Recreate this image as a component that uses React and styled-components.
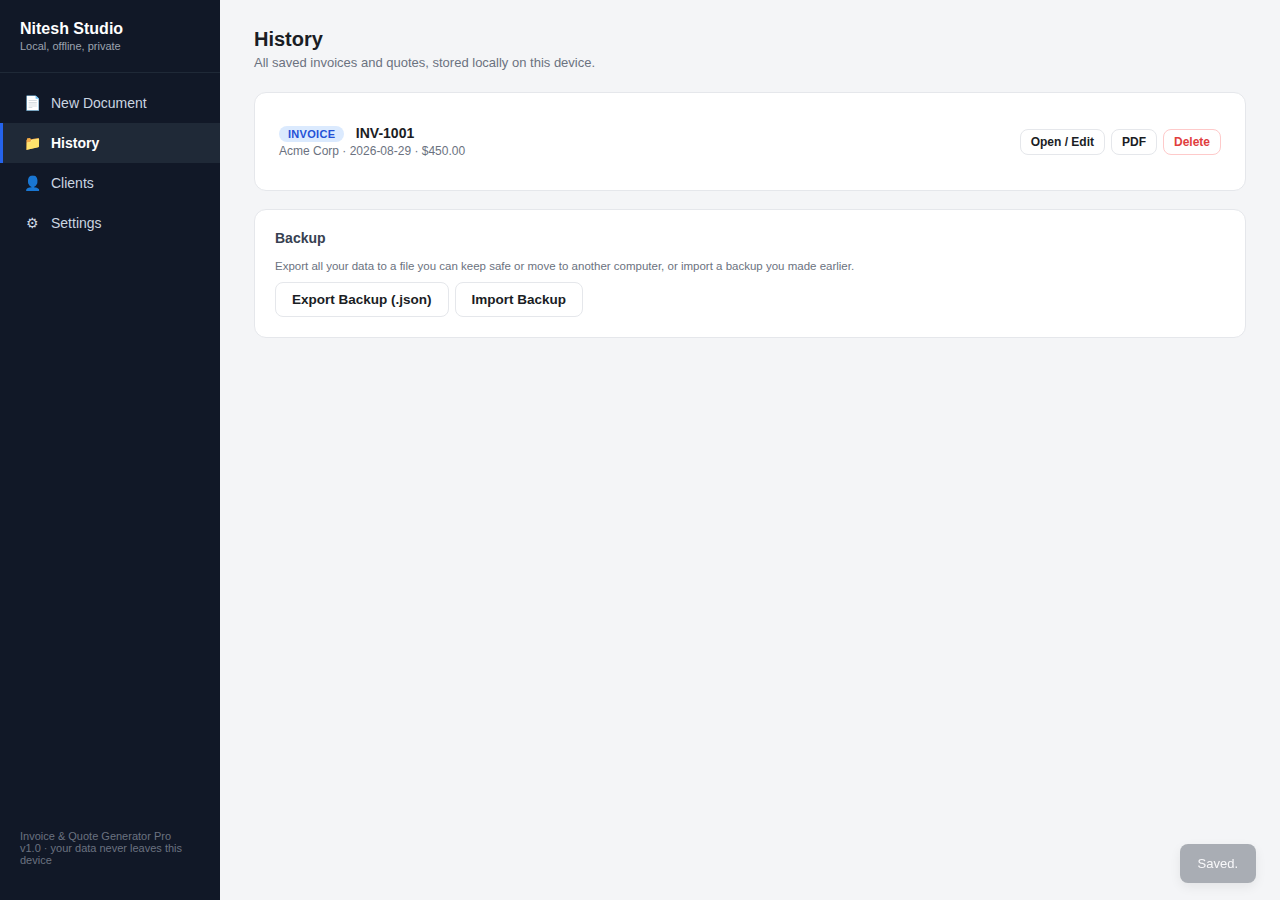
import React from 'react'
import styled, { createGlobalStyle } from 'styled-components'

const GlobalStyle = createGlobalStyle`
  * {
    box-sizing: border-box;
  }

  html, body {
    margin: 0;
    padding: 0;
    height: 100%;
  }

  body {
    background: #f4f5f7;
    color: #1f2937;
    font-family: "Liberation Sans", Arial, sans-serif;
  }
`

const Layout = styled.div`
  display: flex;
  min-height: 900px;
`

const Sidebar = styled.aside`
  flex: 0 0 220px;
  display: flex;
  flex-direction: column;
  background: #111827;
  color: #d1d5db;
`

const Brand = styled.div`
  padding: 20px 20px 19px;
  border-bottom: 1px solid #1f2937;
`

const BrandName = styled.div`
  font-size: 16px;
  line-height: 18px;
  font-weight: 700;
  color: #ffffff;
`

const BrandSub = styled.div`
  margin-top: 2px;
  font-size: 11px;
  line-height: 13px;
  color: #9ca3af;
`

const Nav = styled.nav`
  flex: 1;
  padding: 10px 0;
`

const NavItem = styled.div`
  display: flex;
  align-items: center;
  gap: 10px;
  height: 40px;
  padding: 0 20px;
  border-left: 3px solid ${(p) => (p.$active ? '#2563eb' : 'transparent')};
  background: ${(p) => (p.$active ? '#1f2937' : 'transparent')};
  color: ${(p) => (p.$active ? '#ffffff' : '#cbd5e1')};
  font-size: 14px;
  font-weight: ${(p) => (p.$active ? 700 : 400)};
`

const NavIcon = styled.span`
  flex: 0 0 18px;
  text-align: center;
  font-size: 14px;
`

const SidebarFooter = styled.div`
  padding: 0 20px 34px;
  font-size: 11px;
  line-height: 12px;
  color: #6b7280;
`

const Main = styled.main`
  flex: 1;
  padding: 28px 34px;
`

const PageTitle = styled.h1`
  margin: 0;
  font-size: 20px;
  line-height: 23px;
  font-weight: 700;
  color: #1a1d24;
`

const PageSub = styled.p`
  margin: 4px 0 22px;
  font-size: 13px;
  line-height: 15px;
  color: #6b7280;
`

const Card = styled.section`
  margin-bottom: 18px;
  padding: 20px;
  background: #ffffff;
  border: 1px solid #e5e7eb;
  border-radius: 12px;
`

const DocRow = styled.div`
  display: flex;
  align-items: center;
  justify-content: space-between;
  padding: 12px 4px;
`

const DocTop = styled.div`
  display: flex;
  align-items: baseline;
  gap: 11.5px;
`

const Badge = styled.span`
  padding: 2px 9px;
  background: #dbeafe;
  border-radius: 999px;
  color: #2451d6;
  font-size: 11px;
  line-height: 12px;
  font-weight: 700;
  letter-spacing: 0.3px;
`

const DocNumber = styled.span`
  font-size: 14px;
  line-height: 16px;
  font-weight: 700;
  color: #1a1d24;
`

const DocMeta = styled.div`
  margin-top: 2px;
  font-size: 12px;
  line-height: 14px;
  color: #6b7280;
`

const Actions = styled.div`
  display: flex;
  gap: 6px;
`

const SmallButton = styled.button`
  height: 26px;
  padding: 0 10px;
  background: #ffffff;
  border: 1px solid ${(p) => (p.$danger ? '#fecaca' : '#e5e7eb')};
  border-radius: 8px;
  color: ${(p) => (p.$danger ? '#e03e3e' : '#1a1d24')};
  font-family: inherit;
  font-size: 12px;
  font-weight: 700;
`

const CardTitle = styled.h3`
  margin: 0 0 14px;
  font-size: 14px;
  line-height: 16px;
  font-weight: 700;
  color: #374151;
`

const CardText = styled.p`
  margin: 0 0 9px;
  font-size: 11.5px;
  line-height: 13px;
  color: #6b7280;
`

const Button = styled.button`
  height: 35px;
  margin-right: 6px;
  padding: 0 16px;
  background: #ffffff;
  border: 1px solid #e5e7eb;
  border-radius: 8px;
  color: #1a1d24;
  font-family: inherit;
  font-size: 13.5px;
  font-weight: 700;
`

const Toast = styled.div`
  position: fixed;
  right: 24px;
  bottom: 17px;
  padding: 12px 18px;
  background: #1f2937;
  border-radius: 8px;
  box-shadow: 0 4px 12px rgba(0, 0, 0, 0.2);
  color: #ffffff;
  font-size: 13px;
  line-height: 15px;
  opacity: 0.35;
`

const navItems = [
  { icon: '📄', label: 'New Document' },
  { icon: '📁', label: 'History', active: true },
  { icon: '👤', label: 'Clients' },
  { icon: '⚙', label: 'Settings' }
]

const App = () => (
  <Layout>
    <GlobalStyle />
    <Sidebar>
      <Brand>
        <BrandName>Nitesh Studio</BrandName>
        <BrandSub>Local, offline, private</BrandSub>
      </Brand>
      <Nav>
        {navItems.map((item) => (
          <NavItem key={item.label} $active={item.active}>
            <NavIcon>{item.icon}</NavIcon>
            {item.label}
          </NavItem>
        ))}
      </Nav>
      <SidebarFooter>
        Invoice &amp; Quote Generator Pro
        <br />
        v1.0 · your data never leaves this device
      </SidebarFooter>
    </Sidebar>

    <Main>
      <PageTitle>History</PageTitle>
      <PageSub>All saved invoices and quotes, stored locally on this device.</PageSub>

      <Card>
        <DocRow>
          <div>
            <DocTop>
              <Badge>INVOICE</Badge>
              <DocNumber>INV-1001</DocNumber>
            </DocTop>
            <DocMeta>Acme Corp · 2026-08-29 · $450.00</DocMeta>
          </div>
          <Actions>
            <SmallButton>Open / Edit</SmallButton>
            <SmallButton>PDF</SmallButton>
            <SmallButton $danger>Delete</SmallButton>
          </Actions>
        </DocRow>
      </Card>

      <Card>
        <CardTitle>Backup</CardTitle>
        <CardText>
          Export all your data to a file you can keep safe or move to another computer, or import a backup you made earlier.
        </CardText>
        <Button>Export Backup (.json)</Button>
        <Button>Import Backup</Button>
      </Card>
    </Main>

    <Toast>Saved.</Toast>
  </Layout>
)

export default App
